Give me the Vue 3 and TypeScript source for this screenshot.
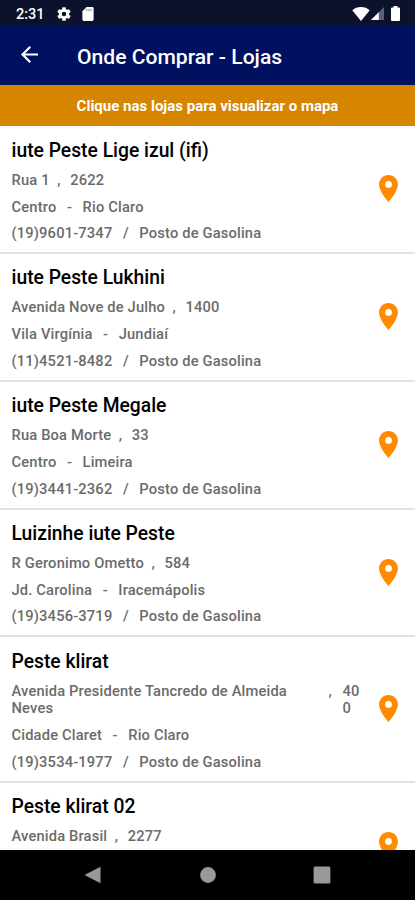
<script setup lang="ts">
interface Store {
  name: string
  street: string
  number: string
  district?: string
  city?: string
  phone?: string
}

const stores: Store[] = [
  { name: 'iute Peste Lige izul (ifi)', street: 'Rua 1', number: '2622', district: 'Centro', city: 'Rio Claro', phone: '(19)9601-7347' },
  { name: 'iute Peste Lukhini', street: 'Avenida Nove de Julho', number: '1400', district: 'Vila Virgínia', city: 'Jundiaí', phone: '(11)4521-8482' },
  { name: 'iute Peste Megale', street: 'Rua Boa Morte', number: '33', district: 'Centro', city: 'Limeira', phone: '(19)3441-2362' },
  { name: 'Luizinhe iute Peste', street: 'R Geronimo Ometto', number: '584', district: 'Jd. Carolina', city: 'Iracemápolis', phone: '(19)3456-3719' },
  { name: 'Peste klirat', street: 'Avenida Presidente Tancredo de Almeida Neves', number: '400', district: 'Cidade Claret', city: 'Rio Claro', phone: '(19)3534-1977' },
  { name: 'Peste klirat 02', street: 'Avenida Brasil', number: '2277' },
]
</script>

<template>
  <div class="screen">
    <div class="status">
      <span class="clock">2:31</span>
      <svg class="gear" viewBox="2 2 20 20"><path fill="#fff" d="M19.14 12.94c.04-.3.06-.61.06-.94s-.02-.64-.07-.94l2.03-1.58a.5.5 0 0 0 .12-.61l-1.92-3.32a.5.5 0 0 0-.59-.22l-2.39.96a7 7 0 0 0-1.62-.94l-.36-2.54a.48.48 0 0 0-.48-.41h-3.84a.48.48 0 0 0-.47.41l-.36 2.54c-.59.24-1.13.57-1.62.94l-2.39-.96a.48.48 0 0 0-.59.22L2.74 8.87a.48.48 0 0 0 .12.61l2.03 1.58a6 6 0 0 0 0 1.88l-2.03 1.58a.5.5 0 0 0-.12.61l1.92 3.32c.12.22.37.29.59.22l2.39-.96c.5.38 1.03.7 1.62.94l.36 2.54c.05.24.24.41.48.41h3.84c.24 0 .44-.17.47-.41l.36-2.54a7 7 0 0 0 1.62-.94l2.39.96c.22.08.47 0 .59-.22l1.92-3.32a.48.48 0 0 0-.12-.61zM12 15.2a3.2 3.2 0 1 1 0-6.4 3.2 3.2 0 0 1 0 6.4z" /></svg>
      <svg class="card" viewBox="4 2 16 20"><path fill="#fff" d="M18 2h-8L4 8v12c0 1.100.9 2 2 2h12c1.100 0 2-.9 2-2V4c0-1.100-.9-2-2-2z" /><path fill="#8b90a4" d="M9.500 4.500h1.500V8H9.500zM12.500 4.500H14V8h-1.500zM15.500 4.500H17V8h-1.500z" /></svg>
      <span class="spacer"></span>
      <svg class="wifi" viewBox="0 0 18 14"><path fill="#fff" d="M9 14 .3 3.300C2.500 1.200 5.500 0 9 0s6.500 1.200 8.700 3.300z" /></svg>
      <svg class="signal" viewBox="0 0 13 13"><path fill="#5d6178" d="M13 0v13H0z" /><path fill="#fff" d="M7.800 5.200V13H0z" /></svg>
      <svg class="battery" viewBox="0 0 9 15"><path fill="#fff" d="M2.500 0h4v1.600H8a1 1 0 0 1 1 1V14a1 1 0 0 1-1 1H1a1 1 0 0 1-1-1V2.600a1 1 0 0 1 1-1h1.500z" /></svg>
    </div>
    <header class="appbar">
      <svg class="back" viewBox="4 4 16 16"><path fill="#fff" d="M20 11H7.830l5.590-5.590L12 4l-8 8 8 8 1.410-1.410L7.830 13H20z" /></svg>
      <h1>Onde Comprar - Lojas</h1>
    </header>
    <div class="banner">Clique nas lojas para visualizar o mapa</div>
    <main class="list">
      <article v-for="store in stores" :key="store.name" class="store">
        <div class="info">
          <h2>{{ store.name }}</h2>
          <div class="line">
            <span class="street">{{ store.street }}</span>
            <span class="comma">,</span>
            <span class="number" :class="{ narrow: store.street.length > 36 }">{{ store.number }}</span>
          </div>
          <div v-if="store.district" class="line spaced"><span>{{ store.district }}</span><span>-</span><span>{{ store.city }}</span></div>
          <div v-if="store.phone" class="line spaced"><span>{{ store.phone }}</span><span>/</span><span>Posto de Gasolina</span></div>
        </div>
        <svg class="pin" viewBox="5 2 14 20"><path fill="#ff8c00" d="M12 2C8.130 2 5 5.130 5 9c0 5.250 7 13 7 13s7-7.750 7-13c0-3.870-3.130-7-7-7zm0 9.500a2.500 2.500 0 1 1 0-5 2.500 2.500 0 0 1 0 5z" /></svg>
      </article>
    </main>
    <nav class="navbar">
      <svg viewBox="0 0 18 18"><path fill="#999" d="M16.500.8v16.400L.5 9z" /></svg>
      <svg viewBox="0 0 18 18"><circle cx="9" cy="9" r="7.900" fill="#999" /></svg>
      <svg viewBox="0 0 18 18"><rect x=".6" y=".6" width="16.800" height="16.800" rx="1.500" fill="#999" /></svg>
    </nav>
  </div>
</template>

<style>
body { margin: 0; }
</style>

<style scoped>
.screen {
  display: flex;
  flex-direction: column;
  width: 415px;
  height: 900px;
  overflow: hidden;
  background: #fff;
  font-family: Roboto, "Liberation Sans", sans-serif;
}
svg { display: block; flex: none; }
.status {
  display: flex;
  align-items: center;
  flex: none;
  height: 26px;
  padding: 1px 15px 0 16px;
  box-sizing: border-box;
  background: #0c122b;
  color: #fff;
}
.clock { width: 40.500px; padding-top: 1px; font-size: 14.500px; font-weight: 500; }
.gear { width: 14px; height: 14px; }
.card { width: 12px; height: 14px; margin-left: 11px; }
.spacer { flex: 1; }
.wifi { width: 18px; height: 14px; }
.signal { width: 13px; height: 13px; margin-left: 1px; }
.battery { width: 9px; height: 15px; margin-left: 7px; }
.appbar {
  display: flex;
  align-items: center;
  flex: none;
  height: 59px;
  padding-left: 21px;
  box-sizing: border-box;
  background: #00125f;
  color: #fff;
}
.back { width: 17px; height: 17px; margin-bottom: 2px; }
h1 { margin: 2px 0 0 39px; font-size: 21.100px; font-weight: 500; line-height: 28px; white-space: nowrap; }
.banner {
  flex: none;
  height: 40.500px;
  line-height: 42px;
  background: #d68500;
  color: #fff;
  text-align: center;
  font-size: 15px;
  font-weight: 700;
}
.list { flex: 1; min-height: 0; padding-top: 1px; overflow: hidden; }
.store {
  display: flex;
  align-items: center;
  box-sizing: border-box;
  min-height: 127.700px;
  padding: 12.300px 16px 9px 11.500px;
  border-bottom: 2px solid #e2e2e2;
}
.info { align-self: flex-start; width: 350px; margin-right: 17.500px; flex: none; }
h2 { margin: 0 0 10px; font-size: 19.300px; font-weight: 500; line-height: 23px; color: #000; }
.line {
  display: flex;
  margin-bottom: 8.800px;
  font-size: 14.700px;
  font-weight: 500;
  line-height: 17.900px;
  letter-spacing: 0.170px;
  color: #6b6b6b;
}
.line:last-child { margin-bottom: 0; }
.comma { margin: 0 9.500px 0 7.500px; }
.street { max-width: 309.500px; }
.number.narrow { width: 18.500px; margin-left: 1px; word-break: break-all; }
.spaced { gap: 10.500px; }
.pin { width: 19px; height: 27px; margin-bottom: 4px; }
.navbar {
  display: flex;
  justify-content: space-between;
  align-items: center;
  flex: none;
  height: 50px;
  padding: 0 84px;
  box-sizing: border-box;
  background: #000;
}
.navbar svg { width: 18px; height: 18px; }
</style>
